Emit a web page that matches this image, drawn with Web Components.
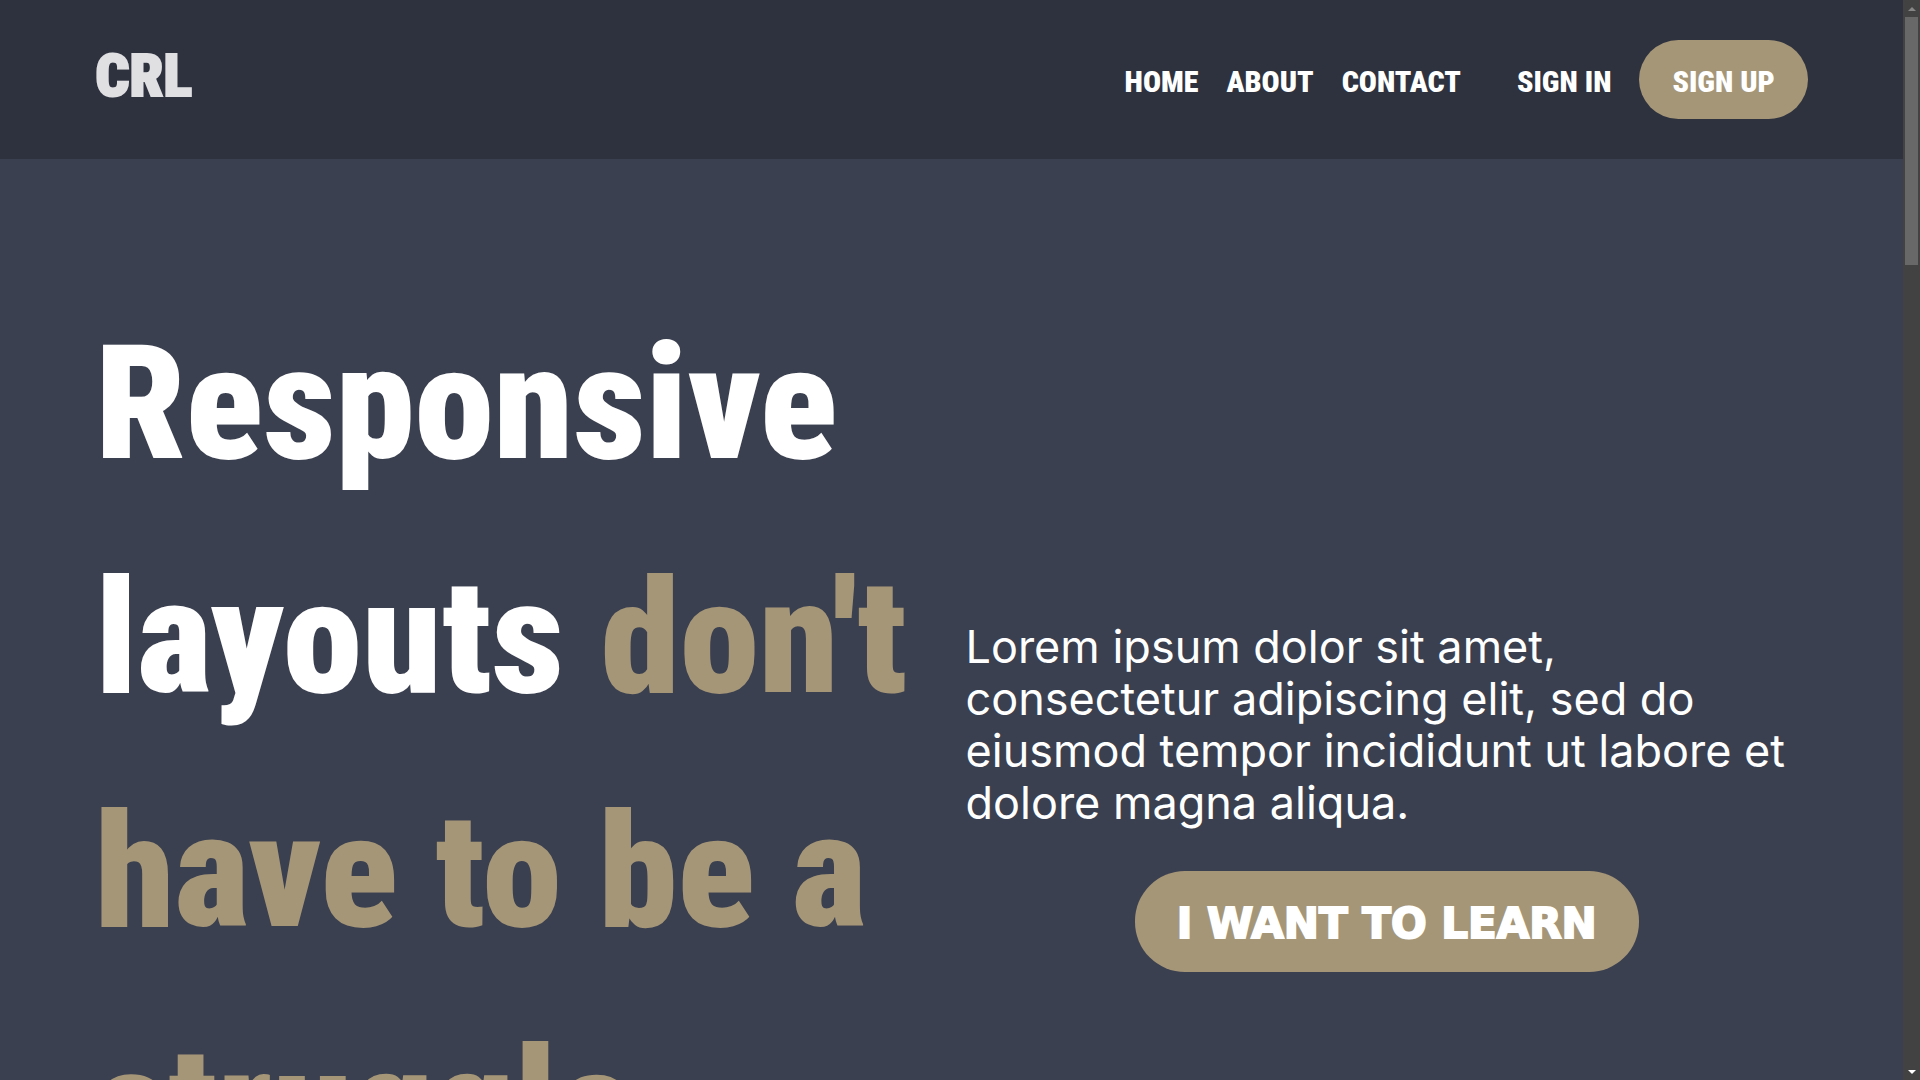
<!DOCTYPE html>
<html lang="en">
<head>
<meta charset="utf-8">
<title>CRL</title>
<style>
  :root {
    --ink: #2e323e;
    --slate: #3b4050;
    --gold: #a59678;
    --condensed: "Roboto Condensed", "Liberation Sans Narrow", "Liberation Sans", sans-serif;
    --body: Inter, "Open Sans", sans-serif;
    --wide: "DejaVu Sans", sans-serif;
  }
  body { margin: 0; background: var(--slate); color: #fff; font-family: var(--body); }
</style>
</head>
<body>
<crl-page>
  <crl-header>
    <crl-logo slot="logo">CRL</crl-logo>
    <crl-link href="#home">HOME</crl-link>
    <crl-link href="#about">ABOUT</crl-link>
    <crl-link href="#contact">CONTACT</crl-link>
    <crl-link slot="account" href="#sign-in">SIGN IN</crl-link>
    <crl-link slot="account" pill href="#sign-up">SIGN UP</crl-link>
  </crl-header>
  <crl-hero>
    <span slot="title">Responsive layouts</span>
    <span slot="accent">don't have to be a struggle</span>
    <span slot="text">Lorem ipsum dolor sit amet, consectetur adipiscing elit, sed do eiusmod tempor incididunt ut labore et dolore magna aliqua.</span>
    <crl-button slot="action">I WANT TO LEARN</crl-button>
  </crl-hero>
  <crl-scrollbar slot="scrollbar"></crl-scrollbar>
</crl-page>
<script>
  const define = (name, html, setup) => {
    const template = document.createElement('template');
    template.innerHTML = html;
    customElements.define(name, class extends HTMLElement {
      constructor() {
        super();
        this.attachShadow({ mode: 'open' }).append(template.content.cloneNode(true));
      }
      connectedCallback() { if (setup) setup(this); }
    });
  };

  define('crl-page', `
    <style>
      :host { display: flex; height: 100vh; overflow: hidden; }
      .view { flex: 1; min-width: 0; overflow: hidden; }
    </style>
    <div class="view"><slot></slot></div>
    <slot name="scrollbar"></slot>`);

  define('crl-header', `
    <style>
      :host { display: block; background: var(--ink); }
      header { display: flex; align-items: center; justify-content: space-between; padding: 40px 5%; }
      nav, .group { display: flex; align-items: center; }
      nav { gap: 56px; }
      .group { gap: 28px; }
    </style>
    <header>
      <slot name="logo"></slot>
      <nav>
        <div class="group"><slot></slot></div>
        <div class="group"><slot name="account"></slot></div>
      </nav>
    </header>`);

  define('crl-logo', `
    <style>
      :host { display: block; color: #e0e0e3; font: 900 60px/64px var(--condensed); margin-bottom: 8px; -webkit-text-stroke: 2px currentColor; }
    </style>
    <slot></slot>`);

  define('crl-link', `
    <style>
      :host { display: block; }
      a { display: block; color: #fff; text-decoration: none; padding-top: 4px; font: 900 30px/39px var(--condensed); }
      :host([pill]) a { background: var(--gold); border-radius: 40px; padding: 22px 33px 18px; }
    </style>
    <a><slot></slot></a>`,
    el => { el.shadowRoot.querySelector('a').href = el.getAttribute('href'); });

  define('crl-hero', `
    <style>
      :host { display: grid; grid-template-columns: 1fr 1fr; column-gap: 28px; padding: 128px 5%; }
      h1 { margin: 0; font: 900 160px/234px var(--condensed); }
      .accent { color: var(--gold); }
      .side { display: flex; flex-direction: column; align-items: center; gap: 42px; padding-top: 334px; }
      p { margin: 0; font: 400 45px/52px var(--body); }
    </style>
    <h1><slot name="title"></slot> <span class="accent"><slot name="accent"></slot></span></h1>
    <div class="side">
      <p><slot name="text"></slot></p>
      <slot name="action"></slot>
    </div>`);

  define('crl-button', `
    <style>
      :host { display: block; }
      button { border: 0; border-radius: 50px; padding: 28px 42px 24px; background: var(--gold); color: #fff; font: bold 42px/49px var(--wide); -webkit-text-stroke: 2px currentColor; cursor: pointer; }
    </style>
    <button type="button"><slot></slot></button>`);

  define('crl-scrollbar', `
    <style>
      :host { display: flex; flex-direction: column; width: 17px; background: #424242; }
      .arrow { display: flex; align-items: center; justify-content: center; height: 17px; }
      .track { flex: 1; padding: 0 2px; }
      .thumb { height: 248px; background: #686868; }
      svg { display: block; }
    </style>
    <div class="arrow"><svg width="8" height="4" viewBox="0 0 8 4" fill="#868686"><path d="M4 0L8 4H0z"/></svg></div>
    <div class="track"><div class="thumb"></div></div>
    <div class="arrow"><svg width="8" height="4" viewBox="0 0 8 4" fill="#fff"><path d="M0 0H8L4 4z"/></svg></div>`);
</script>
</body>
</html>
